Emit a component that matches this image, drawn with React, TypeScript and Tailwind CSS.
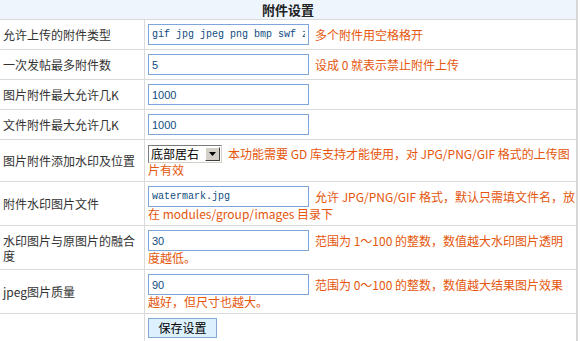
const cjk = "font-['Noto_Sans_CJK_SC',sans-serif]";

type Row = {
  label: string;
  control: "input" | "select";
  value?: string;
  mono?: boolean;
  hint?: string;
  hint2?: string;
};

const rows: Row[] = [
  { label: "允许上传的附件类型", control: "input", value: "gif jpg jpeg png bmp swf zip rar", mono: true, hint: "多个附件用空格格开" },
  { label: "一次发帖最多附件数", control: "input", value: "5", hint: "设成 0 就表示禁止附件上传" },
  { label: "图片附件最大允许几K", control: "input", value: "1000" },
  { label: "文件附件最大允许几K", control: "input", value: "1000" },
  {
    label: "图片附件添加水印及位置",
    control: "select",
    value: "底部居右",
    hint: "本功能需要 GD 库支持才能使用，对 JPG/PNG/GIF 格式的上传图",
    hint2: "片有效",
  },
  {
    label: "附件水印图片文件",
    control: "input",
    value: "watermark.jpg",
    mono: true,
    hint: "允许 JPG/PNG/GIF 格式，默认只需填文件名，放",
    hint2: "在 modules/group/images 目录下",
  },
  {
    label: "水印图片与原图片的融合度",
    control: "input",
    value: "30",
    hint: "范围为 1～100 的整数，数值越大水印图片透明",
    hint2: "度越低。",
  },
  {
    label: "jpeg图片质量",
    control: "input",
    value: "90",
    hint: "范围为 0～100 的整数，数值越大结果图片效果",
    hint2: "越好，但尺寸也越大。",
  },
];

function FakeSelect({ value }: { value: string }) {
  return (
    <div className="flex h-[18px] w-[74px] items-stretch border border-t-[#7a7a7a] border-l-[#7a7a7a] border-b-[#d4d0c8] border-r-[#d4d0c8] bg-white">
      <div className="flex flex-1 items-center pl-[2px] text-[12px] leading-none text-black">{value}</div>
      <div className="m-[1px] flex w-[15px] items-center justify-center border border-t-white border-l-white border-b-[#404040] border-r-[#404040] bg-[#d4d0c8]">
        <svg width="7" height="4" viewBox="0 0 7 4">
          <path d="M0 0h7L3.5 4z" fill="#000" />
        </svg>
      </div>
    </div>
  );
}

export default function App() {
  return (
    <div className={`w-[578px] bg-white text-[12px] text-[#333] ${cjk}`}>
      <div className="border-r-2 border-[#d7d7d7]">
        <div className="flex h-[20px] items-center justify-center border-b border-[#dadada] bg-[#eef5fd] text-[13px] font-bold text-[#222]">
          附件设置
        </div>

        {rows.map((r) => (
          <div key={r.label} className="grid grid-cols-[145px_1fr] border-b border-[#dadada]">
            <div className="flex items-center border-r border-[#dadada] pl-[3px] pr-[3px] leading-[15px]">
              {r.label}
            </div>
            <div className="pl-[3px] pt-[4px] pb-[4px]">
              <div className="flex items-center whitespace-nowrap">
                {r.control === "input" ? (
                  <input
                    readOnly
                    defaultValue={r.value}
                    className={`h-[21px] w-[161px] shrink-0 border border-[#7ea6da] bg-white px-[3px] text-[#0e4c82] outline-none ${
                      r.mono ? "font-['Liberation_Mono',monospace] text-[10px]" : "font-['Liberation_Sans',sans-serif] text-[11px]"
                    }`}
                  />
                ) : (
                  <div className="pt-[1px]">
                    <FakeSelect value={r.value ?? ""} />
                  </div>
                )}
                {r.hint && <span className="ml-[6px] text-[#e5560b]">{r.hint}</span>}
              </div>
              {r.hint2 && <div className="whitespace-nowrap leading-[14px] text-[#e5560b]">{r.hint2}</div>}
            </div>
          </div>
        ))}

        <div className="grid grid-cols-[145px_1fr]">
          <div className="border-r border-[#dadada]" />
          <div className="pl-[3px] pt-[4px] pb-[6px]">
            <button className="flex h-[20px] w-[69px] items-center justify-center border border-[#84a9d8] bg-[#dcf0fd] text-[12px] text-black">
              保存设置
            </button>
          </div>
        </div>
      </div>
    </div>
  );
}
